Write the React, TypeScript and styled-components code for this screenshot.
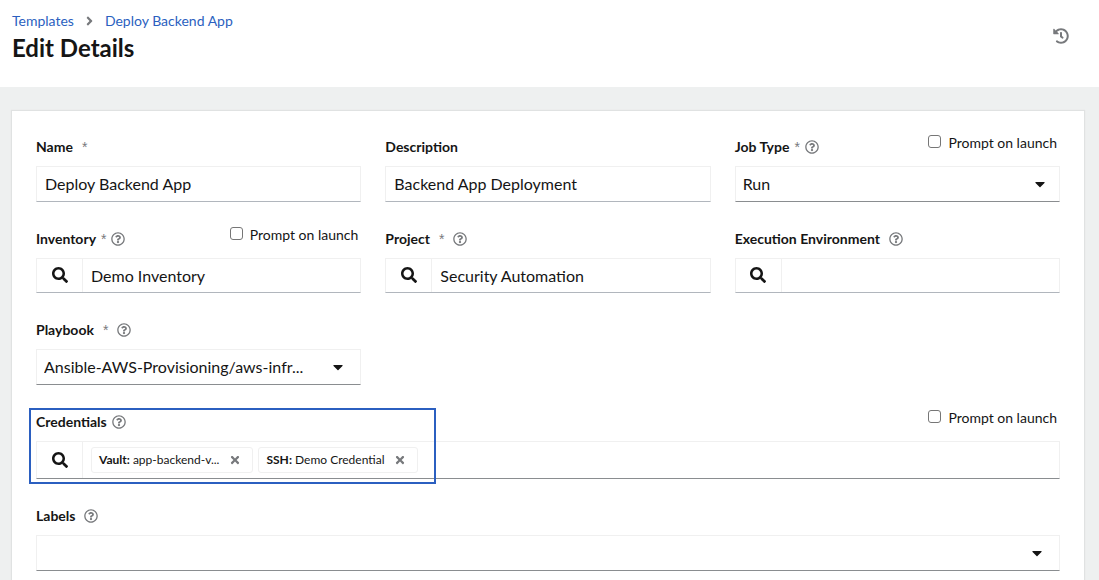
import React, { useId } from 'react';
import styled, { createGlobalStyle } from 'styled-components';
import {
  FaAngleRight,
  FaCaretDown,
  FaHistory,
  FaRegQuestionCircle,
  FaSearch,
  FaTimes,
} from 'react-icons/fa';

const ink = '#151515';
const muted = '#77797c';
const hairline = '#f0f0f0';
const underline = '#8a8d90';
const softUnderline = '#b1b6bd';
const blue = '#2b5fc0';

const GlobalStyle = createGlobalStyle`
  *, *::before, *::after { box-sizing: border-box; }
  body {
    margin: 0;
    background: #eef0f0;
    color: ${ink};
    font-family: Lato, "Liberation Sans", sans-serif;
    font-size: 16px;
  }
  button, input, select { font: inherit; color: inherit; }
`;

const Header = styled.header`
  display: flex;
  justify-content: space-between;
  height: 87px;
  padding: 11px 28px 0 12px;
  background: #fff;
`;

const Breadcrumb = styled.nav`
  display: flex;
  align-items: center;
  gap: 10px;
  font-size: 14px;
  line-height: 20px;
  color: ${muted};
  svg { width: 11px; height: 14px; }
`;

const Crumb = styled.a`
  color: ${blue};
  text-decoration: none;
`;

const Title = styled.h1`
  margin: 0;
  font-size: 24px;
  font-weight: 700;
  line-height: 34px;
`;

const HistoryButton = styled.button`
  display: flex;
  align-items: center;
  height: 50px;
  padding: 0 2px;
  border: 0;
  background: none;
  color: ${muted};
  svg { width: 16px; height: 16px; }
`;

const Main = styled.main`
  padding: 24px 15px 0 12px;
`;

const Card = styled.form`
  display: flex;
  flex-direction: column;
  gap: 25px;
  padding: 24px 24px 32px;
  background: #fff;
  box-shadow: 0 0 1px 1px #e0e2e2;
`;

const Row = styled.div`
  display: grid;
  grid-template-columns: repeat(3, minmax(0, 1fr));
  gap: 24px;
`;

const FieldBox = styled.div`
  position: relative;
  min-width: 0;
`;

const FieldHead = styled.div`
  display: flex;
  justify-content: space-between;
  height: 24px;
  margin-bottom: 7px;
`;

const LabelGroup = styled.div<{ $tight?: boolean }>`
  display: flex;
  align-items: center;
  gap: ${(p) => (p.$tight ? 5 : 9)}px;
`;

const Label = styled.label`
  font-size: 14px;
  font-weight: 700;
  line-height: 24px;
`;

const Required = styled.span`
  font-family: "Liberation Sans", sans-serif;
  font-size: 14px;
  line-height: 24px;
  color: ${muted};
`;

const HelpButton = styled.button`
  display: flex;
  padding: 0;
  border: 0;
  background: none;
  color: ${muted};
  svg { width: 14px; height: 14px; }
`;

const Prompt = styled.label`
  display: flex;
  align-items: flex-start;
  gap: 7px;
  padding-right: 3px;
  font-size: 14px;
  line-height: 16px;
`;

const Tick = styled.input`
  appearance: none;
  width: 13px;
  height: 13px;
  margin: 0;
  border: 1px solid #767676;
  border-radius: 3px;
  background: #fff;
`;

const controlHeights = { lookup: 35, box: 36, chips: 38 };

const Control = styled.div<{ $dark?: boolean; $kind: keyof typeof controlHeights }>`
  display: flex;
  height: ${(p) => controlHeights[p.$kind]}px;
  border: 1px solid ${hairline};
  border-bottom-color: ${(p) => (p.$dark ? underline : softUnderline)};
`;

const TextBox = styled.input`
  flex: 1;
  min-width: 0;
  padding: 0 8px 1px;
  border: 0;
  outline: 0;
  background: none;
`;

const SearchButton = styled.button`
  display: flex;
  flex: none;
  align-items: center;
  justify-content: center;
  width: 46px;
  padding: 0 0 1px;
  border: 0;
  border-right: 1px solid ${hairline};
  background: none;
  svg { width: 16px; height: 16px; }
`;

const SelectArea = styled.div<{ $inset: number }>`
  display: grid;
  flex: 1;
  align-items: center;
  min-width: 0;
  > * { grid-area: 1 / 1; }
  > svg {
    justify-self: end;
    width: 10px;
    height: 16px;
    margin-right: ${(p) => p.$inset}px;
    pointer-events: none;
  }
`;

const Select = styled.select`
  appearance: none;
  width: 100%;
  height: 100%;
  padding: 0 40px 2px 7px;
  border: 0;
  background: none;
`;

const ChipList = styled.ul`
  display: flex;
  align-items: center;
  gap: 5px;
  margin: 0;
  padding: 0 8px;
  list-style: none;
`;

const Chip = styled.li`
  display: flex;
  align-items: center;
  gap: 11px;
  height: 26px;
  padding: 0 12px 0 7px;
  border: 1px solid ${hairline};
  border-radius: 3px;
  font-size: 12px;
  line-height: 22px;
  white-space: nowrap;
`;

const ChipClose = styled.button`
  display: flex;
  padding: 0;
  border: 0;
  background: none;
  color: ${muted};
  svg { width: 10px; height: 12px; }
`;

const Highlight = styled.div`
  position: absolute;
  top: -2px;
  bottom: -5px;
  left: -7px;
  width: 407px;
  border: 2px solid ${blue};
  pointer-events: none;
`;

type FieldProps = {
  label: string;
  required?: boolean;
  help?: boolean;
  tight?: boolean;
  prompt?: boolean;
  children: (id: string) => React.ReactNode;
};

function Field({ label, required, help, tight, prompt, children }: FieldProps) {
  const id = useId();
  return (
    <FieldBox>
      <FieldHead>
        <LabelGroup $tight={tight}>
          <Label htmlFor={id}>{label}</Label>
          {required && <Required aria-hidden="true">*</Required>}
          {help && (
            <HelpButton type="button" aria-label={`More information for ${label}`}>
              <FaRegQuestionCircle />
            </HelpButton>
          )}
        </LabelGroup>
        {prompt && (
          <Prompt>
            <Tick type="checkbox" />
            Prompt on launch
          </Prompt>
        )}
      </FieldHead>
      {children(id)}
    </FieldBox>
  );
}

function Lookup({ id, value }: { id: string; value: string }) {
  return (
    <Control $kind="lookup">
      <SearchButton type="button" aria-label="Search"><FaSearch /></SearchButton>
      <TextBox id={id} defaultValue={value} />
    </Control>
  );
}

function Dropdown({ id, value, inset }: { id: string; value: string; inset: number }) {
  return (
    <Control $dark $kind="box">
      <SelectArea $inset={inset}>
        <Select id={id}><option>{value}</option></Select>
        <FaCaretDown />
      </SelectArea>
    </Control>
  );
}

const credentials = [
  { kind: 'Vault', name: 'app-backend-v...' },
  { kind: 'SSH', name: 'Demo Credential' },
];

export default function App() {
  return (
    <>
      <GlobalStyle />
      <Header>
        <div>
          <Breadcrumb aria-label="Breadcrumb">
            <Crumb href="#templates">Templates</Crumb>
            <FaAngleRight />
            <Crumb href="#template">Deploy Backend App</Crumb>
          </Breadcrumb>
          <Title>Edit Details</Title>
        </div>
        <HistoryButton type="button" aria-label="Activity history"><FaHistory /></HistoryButton>
      </Header>
      <Main>
        <Card>
          <Row>
            <Field label="Name" required>
              {(id) => <Control $kind="box"><TextBox id={id} defaultValue="Deploy Backend App" /></Control>}
            </Field>
            <Field label="Description">
              {(id) => <Control $kind="box"><TextBox id={id} defaultValue="Backend App Deployment" /></Control>}
            </Field>
            <Field label="Job Type" required help tight prompt>
              {(id) => <Dropdown id={id} value="Run" inset={14} />}
            </Field>
          </Row>
          <Row>
            <Field label="Inventory" required help tight prompt>
              {(id) => <Lookup id={id} value="Demo Inventory" />}
            </Field>
            <Field label="Project" required help>
              {(id) => <Lookup id={id} value="Security Automation" />}
            </Field>
            <Field label="Execution Environment" help>
              {(id) => <Lookup id={id} value="" />}
            </Field>
          </Row>
          <Row>
            <Field label="Playbook" required help>
              {(id) => <Dropdown id={id} value="Ansible-AWS-Provisioning/aws-infr..." inset={17} />}
            </Field>
          </Row>
          <FieldBox>
            <Field label="Credentials" help tight prompt>
              {(id) => (
                <Control $dark $kind="chips">
                  <SearchButton id={id} type="button" aria-label="Search"><FaSearch /></SearchButton>
                  <ChipList>
                    {credentials.map((c) => (
                      <Chip key={c.kind}>
                        <span><b>{c.kind}:</b> {c.name}</span>
                        <ChipClose type="button" aria-label={`Remove ${c.name}`}><FaTimes /></ChipClose>
                      </Chip>
                    ))}
                  </ChipList>
                </Control>
              )}
            </Field>
            <Highlight />
          </FieldBox>
          <Field label="Labels" help>
            {(id) => <Dropdown id={id} value="" inset={17} />}
          </Field>
        </Card>
      </Main>
    </>
  );
}
